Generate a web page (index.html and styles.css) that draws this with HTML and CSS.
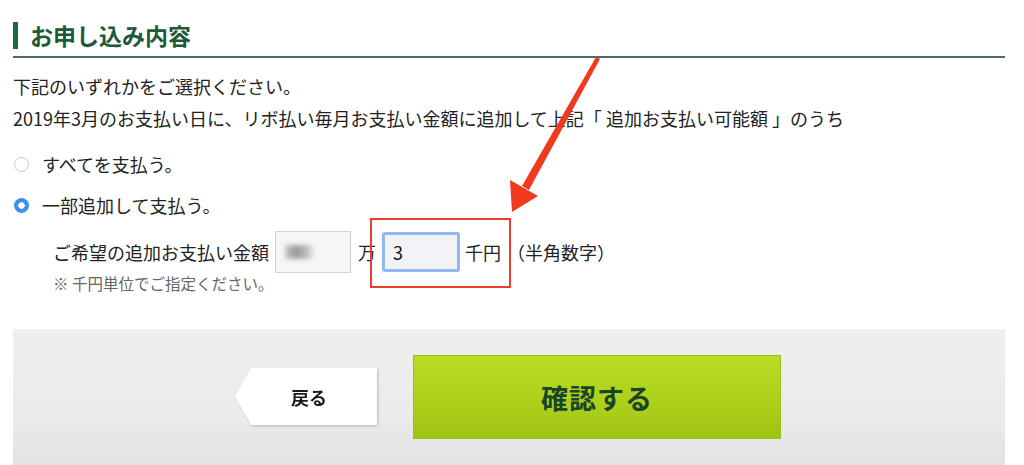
FILE: index.html
```html
<!DOCTYPE html>
<html lang="ja">
<head>
<meta charset="utf-8">
<link rel="stylesheet" href="styles.css">
</head>
<body>
<div class="page">
  <h2 class="heading"><span class="heading-bar"></span>お申し込み内容</h2>
  <p class="lead">下記のいずれかをご選択ください。</p>
  <p class="lead">2019年3月のお支払い日に、リボ払い毎月お支払い金額に追加して上記「 追加お支払い可能額 」のうち</p>
  <div class="options">
    <label class="option"><span class="radio"></span>すべてを支払う。</label>
    <label class="option"><span class="radio checked"></span>一部追加して支払う。</label>
  </div>
  <div class="amount">
    <div class="amount-row">
      <span class="amount-label">ご希望の追加お支払い金額</span>
      <span class="field blurred"><span class="blur"></span></span>
      <span class="unit">万</span>
      <span class="field focused">3</span>
      <span class="unit">千円</span>
      <span class="hint">（半角数字）</span>
    </div>
    <p class="note">※ 千円単位でご指定ください。</p>
  </div>
  <div class="actions">
    <div class="back-wrap"><div class="back-btn">戻る</div></div>
    <div class="confirm-btn">確認する</div>
  </div>
</div>
<div class="annot-box"></div>
<svg class="annot-arrow" width="1024" height="465" viewBox="0 0 1024 465">
  <polygon points="596,57 600,59 529,190 522,186" fill="#f03a1e"/>
  <polygon points="512,212 510,180 538,196" fill="#f03a1e"/>
</svg>
</body>
</html>
```

FILE: styles.css
```css
html, body {
  margin: 0;
  padding: 0;
  background: #fff;
}
body {
  font-family: "Noto Sans CJK JP", "Noto Sans", sans-serif;
  color: #222;
  width: 1024px;
  height: 465px;
  overflow: hidden;
  position: relative;
}
.page {
  margin-left: 13px;
  width: 992px;
  padding-top: 14px;
}
.heading {
  margin: 0;
  display: flex;
  align-items: center;
  gap: 12px;
  font-size: 23px;
  font-weight: 700;
  color: #1d5a37;
  height: 42px;
  border-bottom: 2px solid #4d6b5e;
  line-height: 1;
}
.heading-bar {
  width: 5px;
  height: 27px;
  background: #1d6a3c;
}
.lead {
  margin: 0;
  font-size: 18px;
  line-height: 32px;
}
.page .lead:first-of-type {
  margin-top: 12px;
}
.options {
  margin-top: 14px;
  display: flex;
  flex-direction: column;
  gap: 9px;
}
.option {
  display: flex;
  align-items: center;
  gap: 13px;
  font-size: 18px;
  height: 32px;
  padding-left: 1px;
}
.radio {
  width: 15px;
  height: 15px;
  border-radius: 50%;
  border: 1px solid #c9c9c9;
  background: #fff;
  box-sizing: border-box;
}
.radio.checked {
  border: none;
  background: radial-gradient(circle, #fff 0 3px, #3d8ff0 3.5px);
}
.amount {
  margin-top: 10px;
  padding-left: 40px;
}
.amount-row {
  display: flex;
  align-items: center;
  font-size: 18px;
  height: 42px;
}
.amount-label {
  margin-right: 6px;
}
.field {
  box-sizing: border-box;
  width: 76px;
  height: 42px;
  border: 1px solid #d4d4d4;
  background: #f6f6f6;
  display: flex;
  align-items: center;
  padding-left: 9px;
  font-size: 18px;
}
.blur {
  width: 28px;
  height: 14px;
  background: linear-gradient(90deg, #c8c8c8, #9a9a9a 40%, #b5b5b5 70%, #e0e0e0);
  filter: blur(2px);
}
.unit {
  margin-left: 7px;
  margin-right: 6px;
}
.field.focused {
  width: 78px;
  height: 40px;
  border: 3px solid #8fb8ee;
  border-radius: 3px;
  background: #f1f3f7;
  padding-left: 8px;
  color: #111;
}
.field.focused + .unit {
  margin-left: 5px;
}
.hint {
  margin-left: 0;
}
.note {
  margin: 0;
  font-size: 15.5px;
  color: #666;
  line-height: 20px;
}
.actions {
  margin-top: 36px;
  height: 140px;
  background: linear-gradient(#efefef, #ebebeb 60%, #e2e2e2);
  display: flex;
  align-items: flex-start;
  padding-left: 222px;
  gap: 36px;
  box-sizing: border-box;
  padding-top: 26px;
}
.back-wrap {
  margin-top: 13px;
  filter: drop-shadow(1px 1px 1px rgba(0,0,0,0.22));
}
.back-btn {
  width: 142px;
  height: 57px;
  background: #fff;
  clip-path: polygon(16px 0, 100% 0, 100% 100%, 16px 100%, 0 50%);
  display: flex;
  align-items: center;
  justify-content: center;
  font-size: 18px;
  font-weight: 700;
  color: #1a1a1a;
  padding-left: 6px;
  box-sizing: border-box;
}
.confirm-btn {
  width: 368px;
  height: 84px;
  background: linear-gradient(#b9dc25, #acd01a 60%, #9fc312);
  border: 1px solid #9cbc1a;
  box-sizing: border-box;
  display: flex;
  align-items: center;
  justify-content: center;
  font-size: 27px;
  font-weight: 700;
  color: #1a4526;
  letter-spacing: 1px;
}
.annot-box {
  position: absolute;
  left: 370px;
  top: 218px;
  width: 141px;
  height: 70px;
  border: 2px solid #e8402a;
  box-sizing: border-box;
}
.annot-arrow {
  position: absolute;
  left: 0;
  top: 0;
}
```
